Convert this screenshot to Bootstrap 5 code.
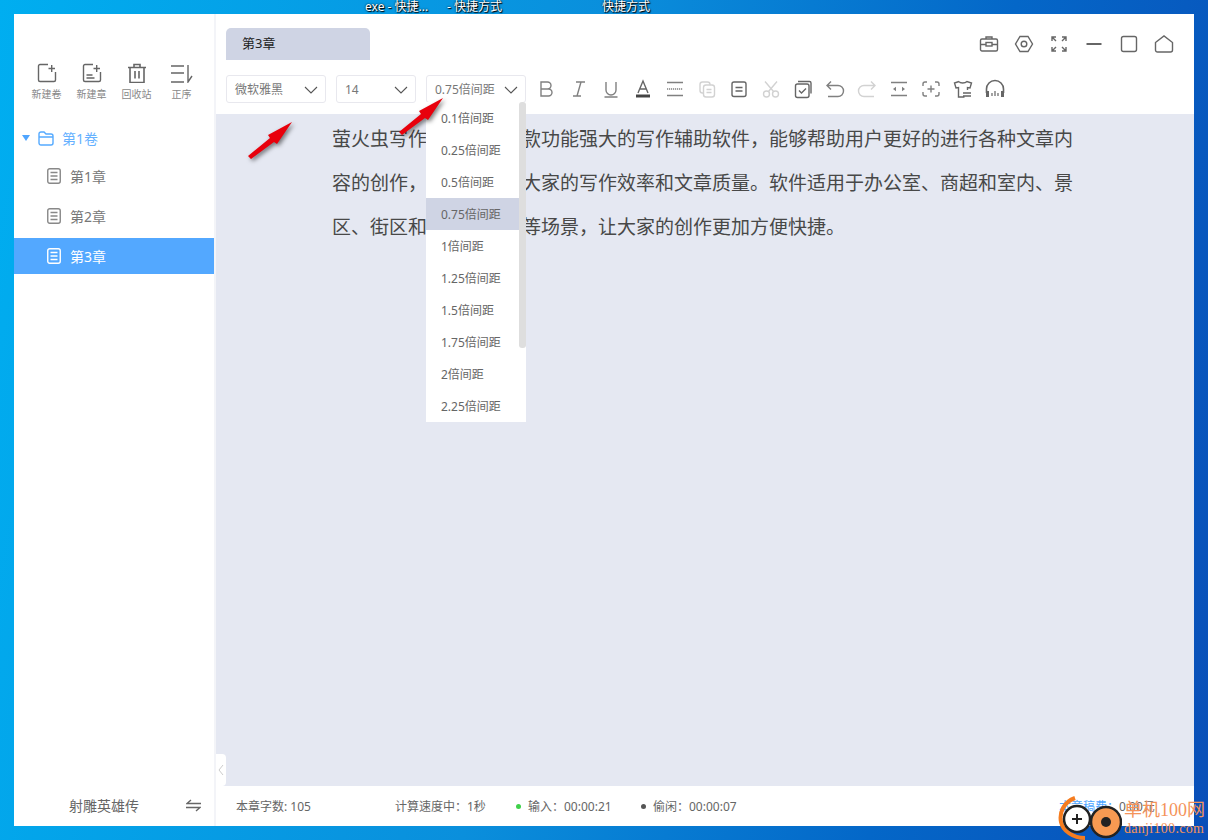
<!DOCTYPE html>
<html lang="zh">
<head>
<meta charset="UTF-8">
<title>萤火虫写作</title>
<link href="https://cdn.jsdelivr.net/npm/bootstrap@5.3.0/dist/css/bootstrap.min.css" rel="stylesheet">
<style>
html, body { height: 100%; }
body {
    margin: 0; width: 1208px; height: 840px; overflow: hidden; position: relative;
    background: linear-gradient(100deg, #00aef0 0%, #0a8fdc 45%, #0467c8 75%, #0a4fb8 100%);
    font-family: "Noto Sans", "Noto Sans CJK SC", sans-serif; color: #555;
}
svg { display: block; fill: none; stroke: currentColor; stroke-width: 1.4; }
.desk-label { position: absolute; top: 0; color: #fff; font-size: 12px; line-height: 14px; text-shadow: 0 0 2px #000, 1px 1px 1px #000; }
.app-win { position: absolute; left: 14px; top: 14px; width: 1180px; height: 812px; background: #fff; display: flex; }
.side-pane { width: 202px; border-right: 2px solid #f3f4f8; flex: none; display: flex; flex-direction: column; }
.side-tools { padding: 49px 0 0 10px; display: flex; height: 109px; }
.side-tool { width: 45px; display: flex; flex-direction: column; align-items: center; font-size: 10px; color: #888; line-height: 14px; gap: 4px; }
.side-tool svg { color: #666; }
.vol-row { height: 32px; display: flex; align-items: center; padding: 0 0 2px 8px; color: #66b1ff; font-size: 14px; margin-bottom: 2px; }
.tri { width: 0; height: 0; border-left: 4px solid transparent; border-right: 4px solid transparent; border-top: 6px solid #4fa5ff; margin-right: 8px; }
.vol-row svg { margin-right: 8px; color: #55aaff; }
.chap-row { height: 40px; display: flex; align-items: center; padding: 0 0 2px 33px; gap: 9px; font-size: 14px; color: #777; }
.chap-row svg { color: #888; }
.chap-row.is-on { background: #53a8ff; color: #fff; height: 36px; margin-top: 1px; padding-bottom: 0; }
.chap-row.is-on svg { color: #fff; }
.side-foot { margin-top: auto; height: 40px; display: flex; align-items: center; font-size: 14px; color: #666; padding: 0 13px 2px 55px; justify-content: space-between; }
.main-pane { flex: 1; display: flex; flex-direction: column; min-width: 0; position: relative; }
.top-bar { height: 46px; display: flex; align-items: flex-end; justify-content: space-between; padding: 0 20px 0 10px; }
.chap-tab { width: 144px; height: 32px; background: #cfd4e4; border-radius: 5px 5px 0 0; font-size: 13px; color: #222; padding-left: 16px; line-height: 31px; }
.win-btns { display: flex; gap: 15px; align-self: flex-start; padding-top: 20px; color: #666; }
.tool-bar { height: 54px; display: flex; align-items: flex-start; padding: 15px 0 0 10px; }
.pick-box { height: 28px; border: 1px solid #e8e8ee; border-radius: 3px; display: flex; align-items: center; justify-content: space-between; padding: 2px 7px 0 8px; font-size: 12px; color: #777; margin-right: 10px; }
.pick-box svg { color: #555; stroke-width: 1.1; }
.tool-icons { display: flex; gap: 8px; margin-left: -1px; margin-top: 4px; color: #808080; }
.tool-icons .is-off { color: #d2d2d2; }
.tool-icons .is-dark { color: #666; }
.edit-area { flex: 1; background: #e5e8f2; padding: 3px 0 0 116px; font-size: 19px; line-height: 44px; color: #484848; white-space: nowrap; }
.stat-bar { height: 40px; flex: none; display: flex; align-items: center; font-size: 12px; color: #666; padding: 2px 0 0 20px; white-space: nowrap; }
.stat-bar > span { flex: none; }
.dot { display: inline-block; width: 5px; height: 5px; border-radius: 50%; margin-right: 7px; vertical-align: 2px; }
.fold-tab { position: absolute; left: 0; bottom: 40px; width: 10px; height: 32px; background: #fff; border-radius: 0 4px 4px 0; color: #ccc; }
.fold-tab svg { margin: 10px 0 0 1px; stroke-width: 1; }
.drop-list { position: absolute; left: 426px; top: 102px; width: 100px; height: 320px; background: #fff; overflow: hidden; font-size: 12px; color: #666; }
.drop-row { height: 32px; line-height: 34px; padding-left: 15px; width: 93px; white-space: nowrap; }
.drop-row.is-on { background: #cfd4e4; }
.drop-bar { position: absolute; right: 0; top: 0; width: 7px; height: 246px; background: #dedede; border-radius: 3px; }
.mark-arrow { position: absolute; filter: drop-shadow(2px 2px 2px rgba(0,0,0,.5)); }
.wm-mark { position: absolute; left: 1058px; top: 796px; }
.wm-cn { position: absolute; left: 1124px; top: 798px; font-size: 18px; line-height: 24px; color: #f4935a; white-space: nowrap; font-family: "Liberation Serif", "Noto Sans CJK SC", serif; }
.wm-url { position: absolute; left: 1124px; top: 820px; font-size: 14px; line-height: 18px; color: #f4935a; white-space: nowrap; font-family: "Liberation Serif", serif; letter-spacing: .3px; }
</style>
</head>
<body>
<span class="desk-label" style="left:365px">exe - 快捷...</span>
<span class="desk-label" style="left:447px">- 快捷方式</span>
<span class="desk-label" style="left:602px">快捷方式</span>

<div class="app-win">
  <div class="side-pane">
    <div class="side-tools">
      <div class="side-tool"><svg width="20" height="20" viewBox="0 0 20 20"><path d="M11 1.500H3A1.500 1.500 0 0 0 1.500 3v14A1.500 1.500 0 0 0 3 18.500h14a1.500 1.500 0 0 0 1.500-1.500V9M11.500 5.500h6.500M14.700 2v7"/></svg>新建卷</div>
      <div class="side-tool"><svg width="20" height="20" viewBox="0 0 20 20"><path d="M11 1.500H3A1.500 1.500 0 0 0 1.500 3v14A1.500 1.500 0 0 0 3 18.500h14a1.500 1.500 0 0 0 1.500-1.500V9M11.500 5.500h6.500M14.700 2v7M4.500 12h6M4.500 15h8"/></svg>新建章</div>
      <div class="side-tool"><svg width="20" height="20" viewBox="0 0 20 20"><path d="M1 4.500h18M7 4.500V1.500h6v3M3 4.500v15h14v-15M8 8v7.500M12 8v7.500" stroke-width="1.600"/></svg>回收站</div>
      <div class="side-tool"><svg width="23" height="20" viewBox="0 0 23 20"><path d="M1 3h13M1 10h13M1 19h13M18 2v17l4-6"/></svg>正序</div>
    </div>
    <div class="vol-row"><span class="tri"></span><svg width="16" height="15" viewBox="0 0 16 15"><path d="M1 3a2 2 0 0 1 2-2h3l2 2h5a2 2 0 0 1 2 2v7a2 2 0 0 1-2 2H3a2 2 0 0 1-2-2zM1 6h14"/></svg>第1卷</div>
    <div class="chap-row"><svg width="14" height="16" viewBox="0 0 14 16"><rect x=".75" y=".75" width="12.500" height="14.500" rx="2"/><path d="M3.500 4.500h7M3.500 8h7M3.500 11.500h7"/></svg>第1章</div>
    <div class="chap-row"><svg width="14" height="16" viewBox="0 0 14 16"><rect x=".75" y=".75" width="12.500" height="14.500" rx="2"/><path d="M3.500 4.500h7M3.500 8h7M3.500 11.500h7"/></svg>第2章</div>
    <div class="chap-row is-on"><svg width="14" height="16" viewBox="0 0 14 16"><rect x=".75" y=".75" width="12.500" height="14.500" rx="2"/><path d="M3.500 4.500h7M3.500 8h7M3.500 11.500h7"/></svg>第3章</div>
    <div class="side-foot"><span>射雕英雄传</span><svg width="15" height="13" viewBox="0 0 15 13"><path d="M15 4.500H1L5 1M0 8.500h14L10 12"/></svg></div>
  </div>
  <div class="main-pane">
    <div class="top-bar">
      <div class="chap-tab">第3章</div>
      <div class="win-btns">
        <svg width="20" height="20" viewBox="0 0 20 20"><rect x="1.500" y="5" width="17" height="12" rx="1.500"/><path d="M7 5V3h6v2M1.500 10.500h5.500M13 10.500h5.500"/><rect x="7" y="8.500" width="6" height="3.500"/></svg>
        <svg width="20" height="20" viewBox="0 0 20 20"><path d="M6 2.500h8l4.500 7.500-4.500 7.500H6L1.500 10z"/><circle cx="10" cy="10" r="2.800"/></svg>
        <svg width="20" height="20" viewBox="0 0 20 20"><path d="M3 7V3h4M3 3l4 4M17 7V3h-4M17 3l-4 4M3 13v4h4M3 17l4-4M17 13v4h-4M17 17l-4-4"/></svg>
        <svg width="20" height="20" viewBox="0 0 20 20"><path d="M2.500 10h15" stroke-width="2"/></svg>
        <svg width="20" height="20" viewBox="0 0 20 20"><rect x="2.500" y="2.500" width="15" height="15" rx="2"/></svg>
        <svg width="20" height="20" viewBox="0 0 20 20"><path d="M1.500 8.500L10 2l8.500 6.500V16a2 2 0 0 1-2 2h-13a2 2 0 0 1-2-2z"/></svg>
      </div>
    </div>
    <div class="tool-bar">
      <div class="pick-box" style="width:100px">微软雅黑<svg width="14" height="8" viewBox="0 0 14 8"><path d="M1 1l6 6 6-6"/></svg></div>
      <div class="pick-box" style="width:80px">14<svg width="14" height="8" viewBox="0 0 14 8"><path d="M1 1l6 6 6-6"/></svg></div>
      <div class="pick-box" style="width:100px">0.75倍间距<svg width="14" height="8" viewBox="0 0 14 8"><path d="M1 1l6 6 6-6"/></svg></div>
      <div class="tool-icons">
        <svg width="24" height="20" viewBox="0 0 24 20"><path d="M6 3h6.500a3.500 3.500 0 0 1 0 7H6zM6 10h7.500a3.500 3.500 0 0 1 0 7H6z"/></svg>
        <svg width="24" height="20" viewBox="0 0 24 20"><path d="M9 3h9M6 17h8M14 3l-4 14"/></svg>
        <svg width="24" height="20" viewBox="0 0 24 20"><path d="M7 3v8a5 5 0 0 0 10 0V3M5.500 18h13"/></svg>
        <svg width="24" height="20" viewBox="0 0 24 20" class="is-dark"><path d="M7 14l5-12 5 12M8.500 10h7"/><path d="M5 17h14" stroke="#444" stroke-width="3"/></svg>
        <svg width="24" height="20" viewBox="0 0 24 20"><path d="M4 3.500h16M4 16.500h16"/><path d="M4 10h16" stroke-dasharray="1.200 .8"/></svg>
        <svg class="is-off" width="24" height="20" viewBox="0 0 24 20"><rect x="5" y="3" width="10" height="11" rx="2.500"/><rect x="8.500" y="6" width="11" height="12" rx="2.500" fill="#fff"/><path d="M11.500 10.500h5M11.500 13.500h5"/></svg>
        <svg class="is-dark" width="24" height="20" viewBox="0 0 24 20"><rect x="5" y="3" width="14" height="14.500" rx="2"/><path d="M8.500 8.500h7M8.500 12h7"/></svg>
        <svg class="is-off" width="24" height="20" viewBox="0 0 24 20"><path d="M6 2.500l8.500 10M18 2.500l-8.500 10"/><circle cx="7.500" cy="15" r="3"/><circle cx="16.500" cy="15" r="3"/></svg>
        <svg class="is-dark" width="24" height="20" viewBox="0 0 24 20"><rect x="4.500" y="5" width="13.500" height="13.500" rx="2"/><path d="M7 2.500h11.500a1.500 1.500 0 0 1 1.500 1.500v10.500M8 11.500l2.500 2.500 4.500-4.500"/></svg>
        <svg width="24" height="20" viewBox="0 0 24 20"><path d="M8 2.500L4 6.500l4 4M4 6.500h11a5 5 0 0 1 0 11H5"/></svg>
        <svg class="is-off" width="24" height="20" viewBox="0 0 24 20"><path d="M16 2.500l4 4-4 4M20 6.500H9a5 5 0 0 0 0 11h10"/></svg>
        <svg width="24" height="20" viewBox="0 0 24 20"><path d="M4 3.500h16M4 16.500h16"/><path d="M6 10l3-2.200v4.400zM18 10l-3-2.200v4.400z" fill="currentColor" stroke="none"/></svg>
        <svg width="24" height="20" viewBox="0 0 24 20"><path d="M8 3H6a2 2 0 0 0-2 2v2M16 3h2a2 2 0 0 1 2 2v2M20 13v2a2 2 0 0 1-2 2h-2M8 17H6a2 2 0 0 1-2-2v-2M12 6.500v7M8.500 10h7"/></svg>
        <svg class="is-dark" width="24" height="20" viewBox="0 0 24 20"><path d="M8 2.500L3.500 4l1.500 5 2.500-.5V18h6M8 2.500c1 2 6 2 8 0l4.500 1.500-1.500 5-2.500-.5V11M12 14h8M12 17h8"/></svg>
        <svg class="is-dark" width="24" height="20" viewBox="0 0 24 20"><path d="M3.500 14v-4a8.500 8.500 0 0 1 17 0v4" stroke-width="1.600"/><path d="M4.500 12v6M19.500 12v6" stroke-width="3"/><path d="M9 14v3M12 12v5M15 14v3" stroke-width="1.200"/></svg>
      </div>
    </div>
    <div class="edit-area">萤火虫写作软件，是一款功能强大的写作辅助软件，能够帮助用户更好的进行各种文章内<br>容的创作，有效的提高大家的写作效率和文章质量。软件适用于办公室、商超和室内、景<br>区、街区和学校、医院等场景，让大家的创作更加方便快捷。</div>
    <div class="stat-bar">
      <span style="width:159px">本章字数: 105</span>
      <span style="width:121px">计算速度中：1秒</span>
      <span style="width:125px"><i class="dot" style="background:#3fd14a"></i>输入：00:00:21</span>
      <span style="width:418px"><i class="dot" style="background:#555"></i>偷闲：00:00:07</span>
      <span><b class="fw-normal" style="color:#4fa5ff">本章稿费：</b>0.00元</span>
    </div>
    <div class="fold-tab"><svg width="8" height="12" viewBox="0 0 8 12"><path d="M6 1L2 6l4 5"/></svg></div>
  </div>
</div>

<div class="drop-list">
  <div class="drop-row">0.1倍间距</div>
  <div class="drop-row">0.25倍间距</div>
  <div class="drop-row">0.5倍间距</div>
  <div class="drop-row is-on">0.75倍间距</div>
  <div class="drop-row">1倍间距</div>
  <div class="drop-row">1.25倍间距</div>
  <div class="drop-row">1.5倍间距</div>
  <div class="drop-row">1.75倍间距</div>
  <div class="drop-row">2倍间距</div>
  <div class="drop-row">2.25倍间距</div>
  <div class="drop-bar"></div>
</div>

<svg class="mark-arrow" style="left:246px;top:120px" width="48" height="40" viewBox="0 0 48 40"><path d="M2 36L24 18l-2-3L46 2 31 24l-3-2L5 39z" fill="#e8000c" stroke="none"/></svg>
<svg class="mark-arrow" style="left:397px;top:96px" width="48" height="40" viewBox="0 0 48 40"><path d="M2 36L24 18l-2-3L46 2 31 24l-3-2L5 39z" fill="#e8000c" stroke="none"/></svg>

<svg class="wm-mark" width="64" height="44" viewBox="0 0 64 44">
  <path d="M17 2C6 6 1 16 3 26c2 9 12 16 24 16" stroke="#f57c1f" stroke-width="4"/>
  <circle cx="19" cy="23" r="13" fill="#fff" stroke="#222" stroke-width="2.500"/>
  <path d="M14 23h10M19 18v10" stroke="#222" stroke-width="2"/>
  <circle cx="48" cy="26" r="15" fill="#f79a52" stroke="#222" stroke-width="2.500"/>
  <circle cx="48" cy="26" r="5" fill="#222" stroke="none"/>
</svg>
<div class="wm-cn">单机100网</div>
<div class="wm-url">danji100.com</div>

<script src="https://cdn.jsdelivr.net/npm/bootstrap@5.3.0/dist/js/bootstrap.bundle.min.js"></script>
</body>
</html>
